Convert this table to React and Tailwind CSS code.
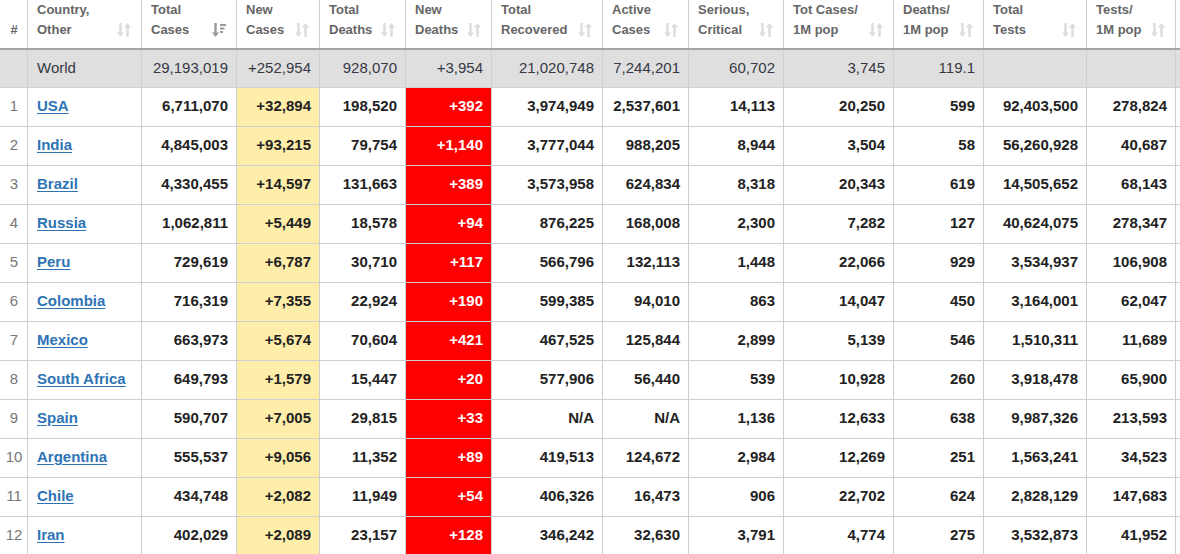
import React from "react";

const cols = [
  { key: "num", w: 28, label: ["#"], sort: null },
  { key: "country", w: 114, label: ["Country,", "Other"], sort: "none" },
  { key: "total", w: 95, label: ["Total", "Cases"], sort: "desc" },
  { key: "newCases", w: 83, label: ["New", "Cases"], sort: "none" },
  { key: "deaths", w: 86, label: ["Total", "Deaths"], sort: "none" },
  { key: "newDeaths", w: 86, label: ["New", "Deaths"], sort: "none" },
  { key: "recovered", w: 111, label: ["Total", "Recovered"], sort: "none" },
  { key: "active", w: 86, label: ["Active", "Cases"], sort: "none" },
  { key: "serious", w: 95, label: ["Serious,", "Critical"], sort: "none" },
  { key: "perM", w: 110, label: ["Tot Cases/", "1M pop"], sort: "none" },
  { key: "deathsM", w: 90, label: ["Deaths/", "1M pop"], sort: "none" },
  { key: "tests", w: 103, label: ["Total", "Tests"], sort: "none" },
  { key: "testsM", w: 89, label: ["Tests/", "1M pop"], sort: "none" },
  { key: "extra", w: 40, label: [""], sort: null },
];

const world = ["", "World", "29,193,019", "+252,954", "928,070", "+3,954", "21,020,748", "7,244,201", "60,702", "3,745", "119.1", "", "", ""];

const rows = [
  ["1", "USA", "6,711,070", "+32,894", "198,520", "+392", "3,974,949", "2,537,601", "14,113", "20,250", "599", "92,403,500", "278,824"],
  ["2", "India", "4,845,003", "+93,215", "79,754", "+1,140", "3,777,044", "988,205", "8,944", "3,504", "58", "56,260,928", "40,687"],
  ["3", "Brazil", "4,330,455", "+14,597", "131,663", "+389", "3,573,958", "624,834", "8,318", "20,343", "619", "14,505,652", "68,143"],
  ["4", "Russia", "1,062,811", "+5,449", "18,578", "+94", "876,225", "168,008", "2,300", "7,282", "127", "40,624,075", "278,347"],
  ["5", "Peru", "729,619", "+6,787", "30,710", "+117", "566,796", "132,113", "1,448", "22,066", "929", "3,534,937", "106,908"],
  ["6", "Colombia", "716,319", "+7,355", "22,924", "+190", "599,385", "94,010", "863", "14,047", "450", "3,164,001", "62,047"],
  ["7", "Mexico", "663,973", "+5,674", "70,604", "+421", "467,525", "125,844", "2,899", "5,139", "546", "1,510,311", "11,689"],
  ["8", "South Africa", "649,793", "+1,579", "15,447", "+20", "577,906", "56,440", "539", "10,928", "260", "3,918,478", "65,900"],
  ["9", "Spain", "590,707", "+7,005", "29,815", "+33", "N/A", "N/A", "1,136", "12,633", "638", "9,987,326", "213,593"],
  ["10", "Argentina", "555,537", "+9,056", "11,352", "+89", "419,513", "124,672", "2,984", "12,269", "251", "1,563,241", "34,523"],
  ["11", "Chile", "434,748", "+2,082", "11,949", "+54", "406,326", "16,473", "906", "22,702", "624", "2,828,129", "147,683"],
  ["12", "Iran", "402,029", "+2,089", "23,157", "+128", "346,242", "32,630", "3,791", "4,774", "275", "3,532,873", "41,952"],
];

function SortIcon({ type }) {
  if (type === "desc") {
    return (
      <svg width="14" height="16" viewBox="0 0 14 16" className="shrink-0 mb-[2px]">
        <path d="M3.5 1v12" stroke="#9a9a9a" strokeWidth="2.4" fill="none" />
        <path d="M0 10.5l3.5 4.5 3.5-4.5z" fill="#9a9a9a" />
        <path d="M8 3h6M8 6.5h4.5M8 10h3" stroke="#9a9a9a" strokeWidth="2" fill="none" />
      </svg>
    );
  }
  return (
    <svg width="14" height="16" viewBox="0 0 14 16" className="shrink-0 mb-[2px]">
      <path d="M3.5 1v11" stroke="#dcdcdc" strokeWidth="2.4" fill="none" />
      <path d="M0 10.5l3.5 4.5 3.5-4.5z" fill="#dcdcdc" />
      <path d="M10.5 15V4" stroke="#dcdcdc" strokeWidth="2.4" fill="none" />
      <path d="M7 5.5l3.5-4.5 3.5 4.5z" fill="#dcdcdc" />
    </svg>
  );
}

function HeaderCell({ col }) {
  if (col.key === "num") {
    return (
      <th className="border border-[#cfcfcf] border-t-0 border-b-0 align-bottom pb-[8px] pl-px text-center text-[13px] font-bold leading-5 text-[#666]">
        #
      </th>
    );
  }
  return (
    <th className="border border-[#cfcfcf] border-t-0 border-b-0 align-bottom pb-[8px] pl-[9px] pr-[10px] text-left text-[13px] font-bold leading-5 text-[#666]">
      <div className="flex items-end justify-between">
        <div className="whitespace-nowrap">
          {col.label.map((l, i) => (
            <div key={i}>{l}</div>
          ))}
        </div>
        {col.sort && <SortIcon type={col.sort} />}
      </div>
    </th>
  );
}

function bodyCellClass(i) {
  let base = "border border-[#cfcfcf] h-[39px] whitespace-nowrap font-bold text-[15px] text-[#222] ";
  if (i === 0) return base + "text-center pl-px text-[12px] font-normal text-[#777]";
  if (i === 1) return base + "text-left pl-[9px]";
  if (i === 3) return base + "text-right pr-[8px] bg-[#ffeeaa]";
  if (i === 5) return base + "text-right pr-[8px] bg-[#ff0000] text-white";
  return base + "text-right pr-[8px]";
}

export default function App() {
  return (
    <div className="w-[1180px] h-[554px] overflow-hidden bg-white" style={{ fontFamily: '"Liberation Sans", Arial, sans-serif' }}>
      <table className="table-fixed border-collapse -ml-px" style={{ width: cols.reduce((a, c) => a + c.w, 0) }}>
        <colgroup>
          {cols.map((c) => (
            <col key={c.key} style={{ width: c.w }} />
          ))}
        </colgroup>
        <thead>
          <tr className="h-[46px] border-b-2 border-b-[#a3a3a3]">
            {cols.map((c) => (
              <HeaderCell key={c.key} col={c} />
            ))}
          </tr>
        </thead>
        <tbody>
          <tr className="bg-[#dfdfdf] h-[38px]">
            {world.map((v, i) => (
              <td
                key={i}
                className={
                  "border border-[#cfcfcf] border-t-0 whitespace-nowrap text-[15px] text-[#363945] " +
                  (i === 1 ? "text-left pl-[9px]" : "text-right pr-[8px]")
                }
              >
                {v}
              </td>
            ))}
          </tr>
          {rows.map((r) => (
            <tr key={r[0]}>
              {[...r, ""].map((v, i) => (
                <td key={i} className={bodyCellClass(i)}>
                  {i === 1 ? (
                    <a href="#" className="text-[#2e74b5] underline underline-offset-2">
                      {v}
                    </a>
                  ) : (
                    v
                  )}
                </td>
              ))}
            </tr>
          ))}
        </tbody>
      </table>
    </div>
  );
}
